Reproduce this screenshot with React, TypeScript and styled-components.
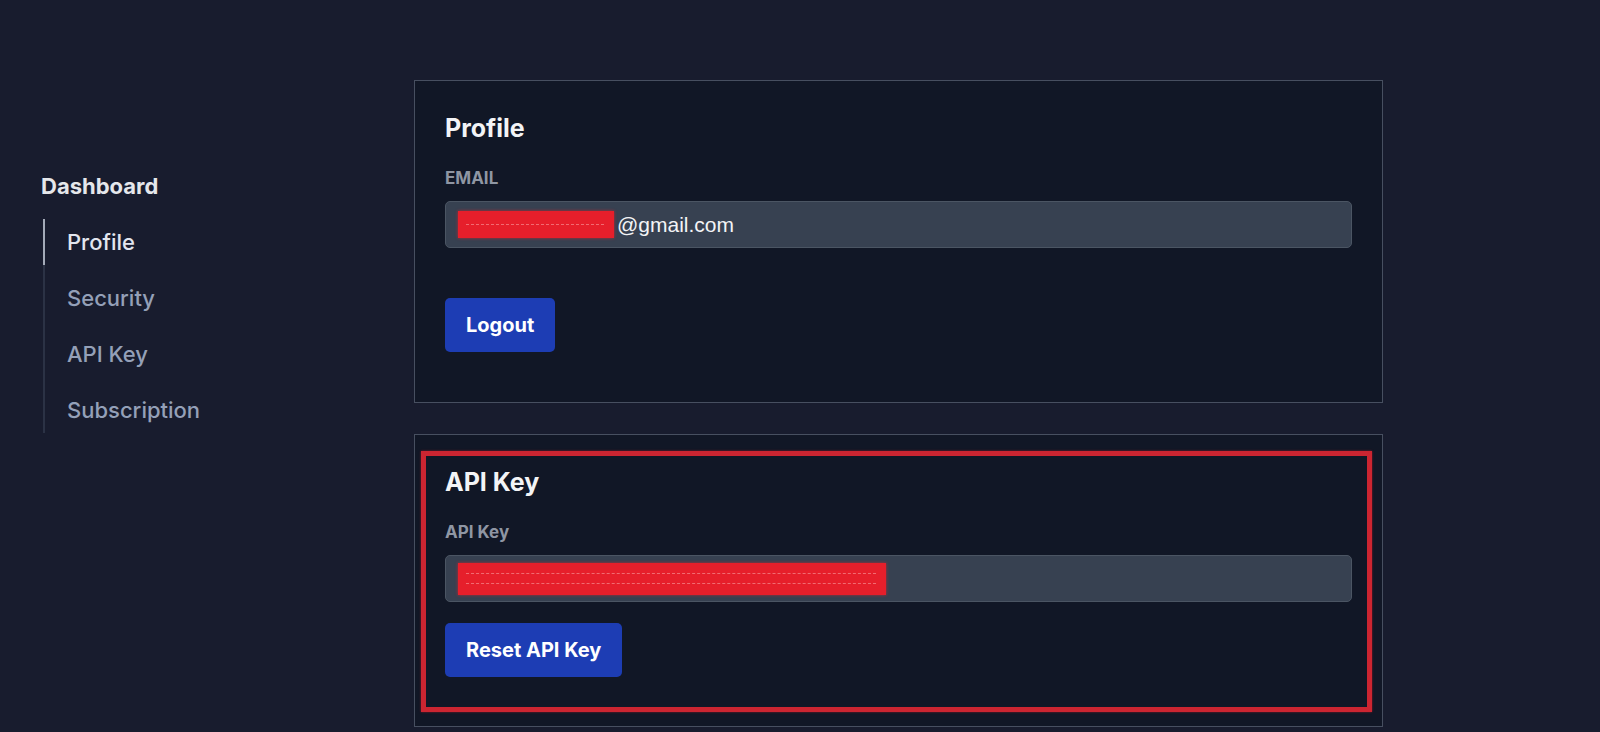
import styled, { createGlobalStyle } from 'styled-components';

const GlobalStyle = createGlobalStyle`
  html, body {
    margin: 0;
    padding: 0;
    background: #181c2e;
    font-family: Inter, "Noto Sans", sans-serif;
    color: #e5e7eb;
  }
  * {
    box-sizing: border-box;
  }
`;

const Page = styled.div`
  display: flex;
  align-items: flex-start;
  min-height: 732px;
  padding: 80px 0 0 41px;
`;

const Sidebar = styled.nav`
  width: 373px;
  flex-shrink: 0;
  padding-top: 83px;
`;

const SideTitle = styled.div`
  font-size: 22px;
  font-weight: 700;
  line-height: 46px;
  color: #e5e7eb;
  margin-bottom: 10px;
`;

const NavList = styled.div`
  display: flex;
  flex-direction: column;
  gap: 10px;
  margin-left: 2px;
  border-left: 2px solid #2b3245;
`;

const NavItem = styled.div<{ $active?: boolean }>`
  font-size: 22px;
  font-weight: 500;
  line-height: 46px;
  height: 46px;
  margin-left: -2px;
  padding-left: 22px;
  border-left: 2px solid ${(p) => (p.$active ? '#a3aab8' : 'transparent')};
  color: ${(p) => (p.$active ? '#e2e5ee' : '#94a0b8')};
`;

const Main = styled.main`
  width: 969px;
  display: flex;
  flex-direction: column;
  gap: 31px;
`;

const Card = styled.section<{ $pad?: string }>`
  background: #111726;
  border: 1px solid #474f60;
  padding: ${(p) => p.$pad || '31px 30px 31px 30px'};
`;

const Marked = styled.div`
  border: 5px solid #cc2531;
  box-shadow: 0 0 2px rgba(220, 30, 40, 0.6);
  padding: 10px 15px 30px 19px;
`;

const Title = styled.h2`
  margin: 0;
  font-size: 25px;
  font-weight: 700;
  line-height: 32px;
  color: #f3f4f6;
`;

const Label = styled.div<{ $upper?: boolean }>`
  margin-top: 22px;
  font-size: 17px;
  font-weight: 700;
  line-height: 24px;
  color: #8f96a3;
  text-transform: ${(p) => (p.$upper ? 'uppercase' : 'none')};
`;

const Field = styled.div`
  margin-top: 11px;
  height: 47px;
  display: flex;
  align-items: center;
  padding: 0 12px;
  background: #374151;
  border: 1px solid #4b5563;
  border-radius: 5px;
  font-family: "Liberation Sans", Arial, sans-serif;
  font-size: 21px;
  color: #f3f4f6;
`;

const Redact = styled.span<{ $w: number; $h: number }>`
  display: inline-block;
  width: ${(p) => p.$w}px;
  height: ${(p) => p.$h}px;
  margin-right: 3px;
  background: #e61f2b;
  box-shadow: 0 0 3px rgba(240, 30, 40, 0.7);
  position: relative;
  overflow: hidden;
`;

const RedactLine = styled.span<{ $top: number }>`
  position: absolute;
  left: 8px;
  right: 10px;
  top: ${(p) => p.$top}px;
  border-top: 1px dashed rgba(255, 200, 200, 0.45);
`;

const Button = styled.button<{ $mt: number }>`
  margin-top: ${(p) => p.$mt}px;
  height: 54px;
  padding: 0 21px;
  background: #1d3db4;
  border: none;
  border-radius: 5px;
  color: #ffffff;
  font-family: Inter, sans-serif;
  font-size: 20px;
  font-weight: 700;
  cursor: pointer;
`;

const Spacer = styled.div`
  height: 19px;
`;

export default function App() {
  return (
    <>
      <GlobalStyle />
      <Page>
        <Sidebar>
          <SideTitle>Dashboard</SideTitle>
          <NavList>
            <NavItem $active>Profile</NavItem>
            <NavItem>Security</NavItem>
            <NavItem>API Key</NavItem>
            <NavItem>Subscription</NavItem>
          </NavList>
        </Sidebar>
        <Main>
          <Card>
            <Title>Profile</Title>
            <Label $upper>Email</Label>
            <Field>
              <Redact $w={156} $h={27}>
                <RedactLine $top={13} />
              </Redact>
              @gmail.com
            </Field>
            <Button $mt={50}>Logout</Button>
            <Spacer />
          </Card>
          <Card $pad="16px 10px 14px 6px">
            <Marked>
              <Title>API Key</Title>
              <Label>API Key</Label>
              <Field>
                <Redact $w={428} $h={32}>
                  <RedactLine $top={10} />
                  <RedactLine $top={20} />
                </Redact>
              </Field>
              <Button $mt={21}>Reset API Key</Button>
            </Marked>
          </Card>
        </Main>
      </Page>
    </>
  );
}
